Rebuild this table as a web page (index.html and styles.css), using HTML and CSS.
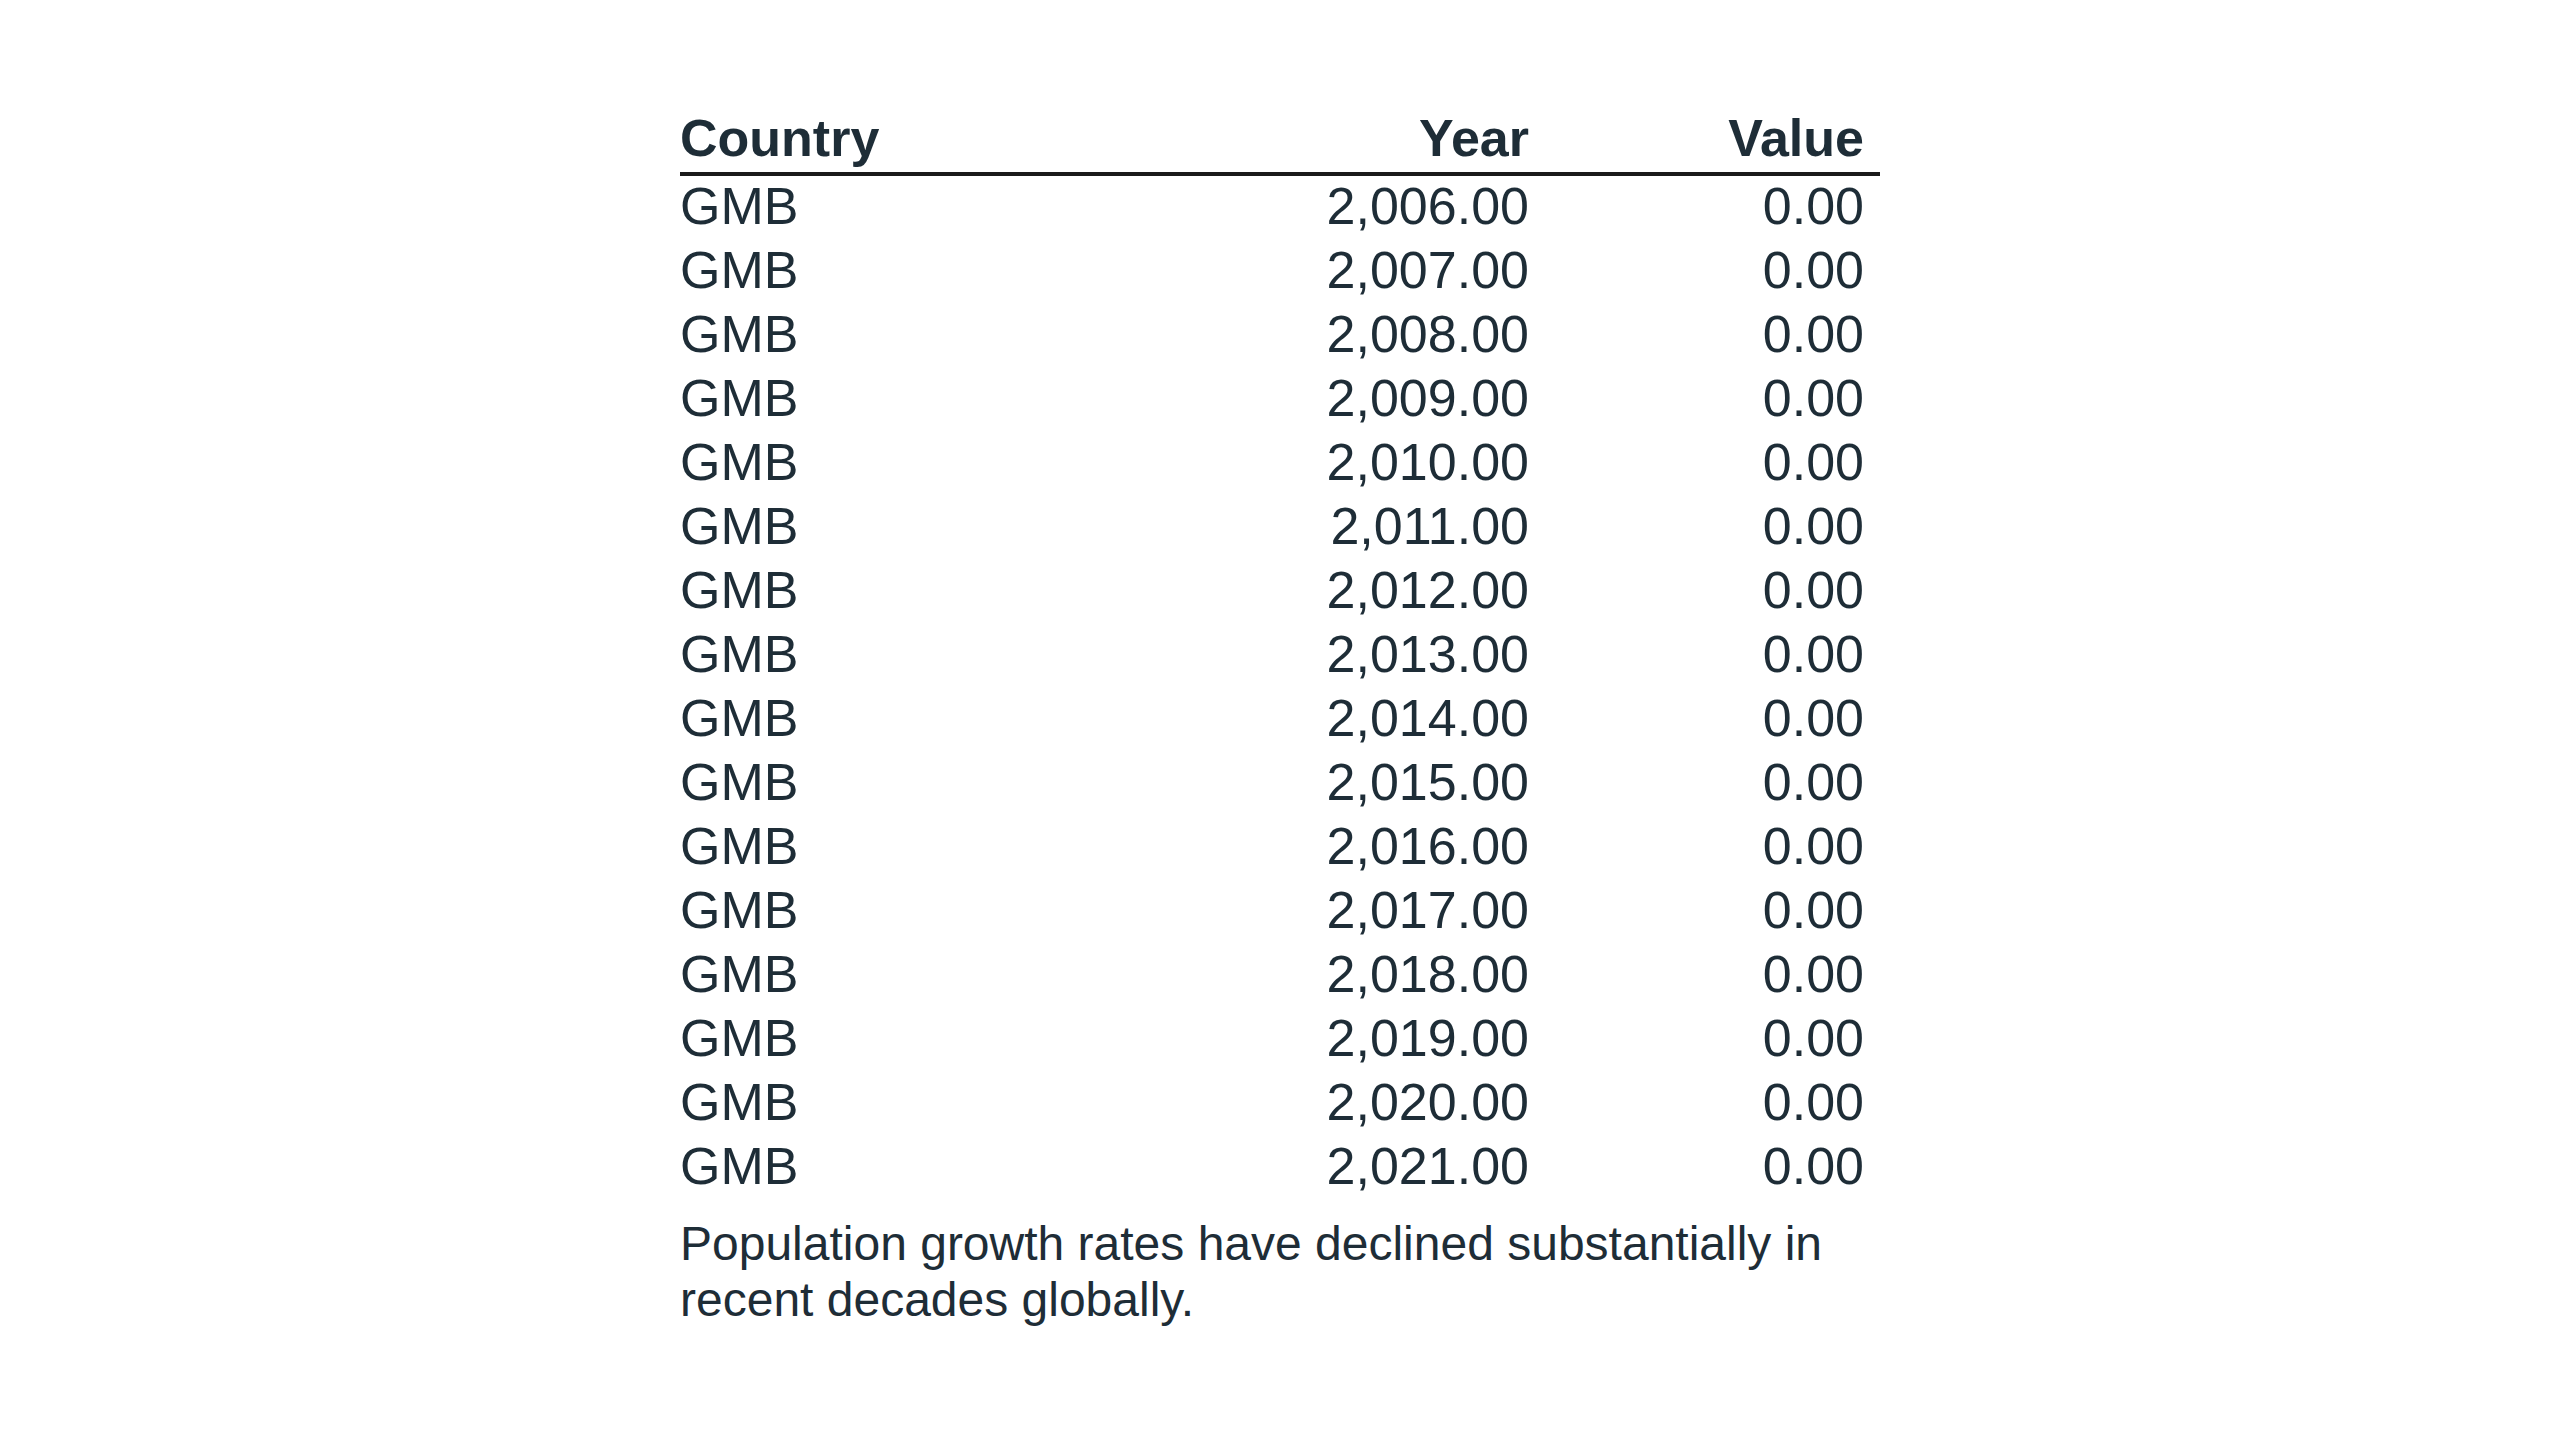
FILE: index.html
```html
<!DOCTYPE html>
<html lang="en">
<head>
<meta charset="utf-8">
<title>Population table</title>
<link rel="stylesheet" href="styles.css">
</head>
<body>
<main class="page">
  <table class="data">
    <colgroup>
      <col class="c-country">
      <col class="c-year">
      <col class="c-value">
    </colgroup>
    <thead>
      <tr><th class="left">Country</th><th class="num">Year</th><th class="num">Value</th></tr>
    </thead>
    <tbody>
      <tr><td>GMB</td><td class="num">2,006.00</td><td class="num">0.00</td></tr>
      <tr><td>GMB</td><td class="num">2,007.00</td><td class="num">0.00</td></tr>
      <tr><td>GMB</td><td class="num">2,008.00</td><td class="num">0.00</td></tr>
      <tr><td>GMB</td><td class="num">2,009.00</td><td class="num">0.00</td></tr>
      <tr><td>GMB</td><td class="num">2,010.00</td><td class="num">0.00</td></tr>
      <tr><td>GMB</td><td class="num">2,011.00</td><td class="num">0.00</td></tr>
      <tr><td>GMB</td><td class="num">2,012.00</td><td class="num">0.00</td></tr>
      <tr><td>GMB</td><td class="num">2,013.00</td><td class="num">0.00</td></tr>
      <tr><td>GMB</td><td class="num">2,014.00</td><td class="num">0.00</td></tr>
      <tr><td>GMB</td><td class="num">2,015.00</td><td class="num">0.00</td></tr>
      <tr><td>GMB</td><td class="num">2,016.00</td><td class="num">0.00</td></tr>
      <tr><td>GMB</td><td class="num">2,017.00</td><td class="num">0.00</td></tr>
      <tr><td>GMB</td><td class="num">2,018.00</td><td class="num">0.00</td></tr>
      <tr><td>GMB</td><td class="num">2,019.00</td><td class="num">0.00</td></tr>
      <tr><td>GMB</td><td class="num">2,020.00</td><td class="num">0.00</td></tr>
      <tr><td>GMB</td><td class="num">2,021.00</td><td class="num">0.00</td></tr>
    </tbody>
  </table>
  <p class="note">Population growth rates have declined substantially in recent decades globally.</p>
</main>
</body>
</html>
```
FILE: styles.css
```css
html, body {
  margin: 0;
  padding: 0;
  background: #ffffff;
}

body {
  font-family: "Liberation Sans", Arial, sans-serif;
  color: #1e2d37;
}

.page {
  width: 1200px;
  margin: 0 auto;
  padding-top: 108px;
}

.data {
  width: 1200px;
  border-collapse: collapse;
  table-layout: fixed;
  font-size: 52px;
}

.c-country { width: 531px; }
.c-year { width: 334px; }
.c-value { width: 335px; }

.data th,
.data td {
  line-height: 60px;
  padding: 0 16px 4px 0;
  white-space: nowrap;
  vertical-align: top;
}

.data th {
  font-weight: 700;
}

.data thead tr {
  border-bottom: 4px solid #1a1a1a;
}

.left { text-align: left; }
.num { text-align: right; }

.note {
  margin: 16px 0 0 0;
  font-size: 48px;
  line-height: 56px;
}
```
